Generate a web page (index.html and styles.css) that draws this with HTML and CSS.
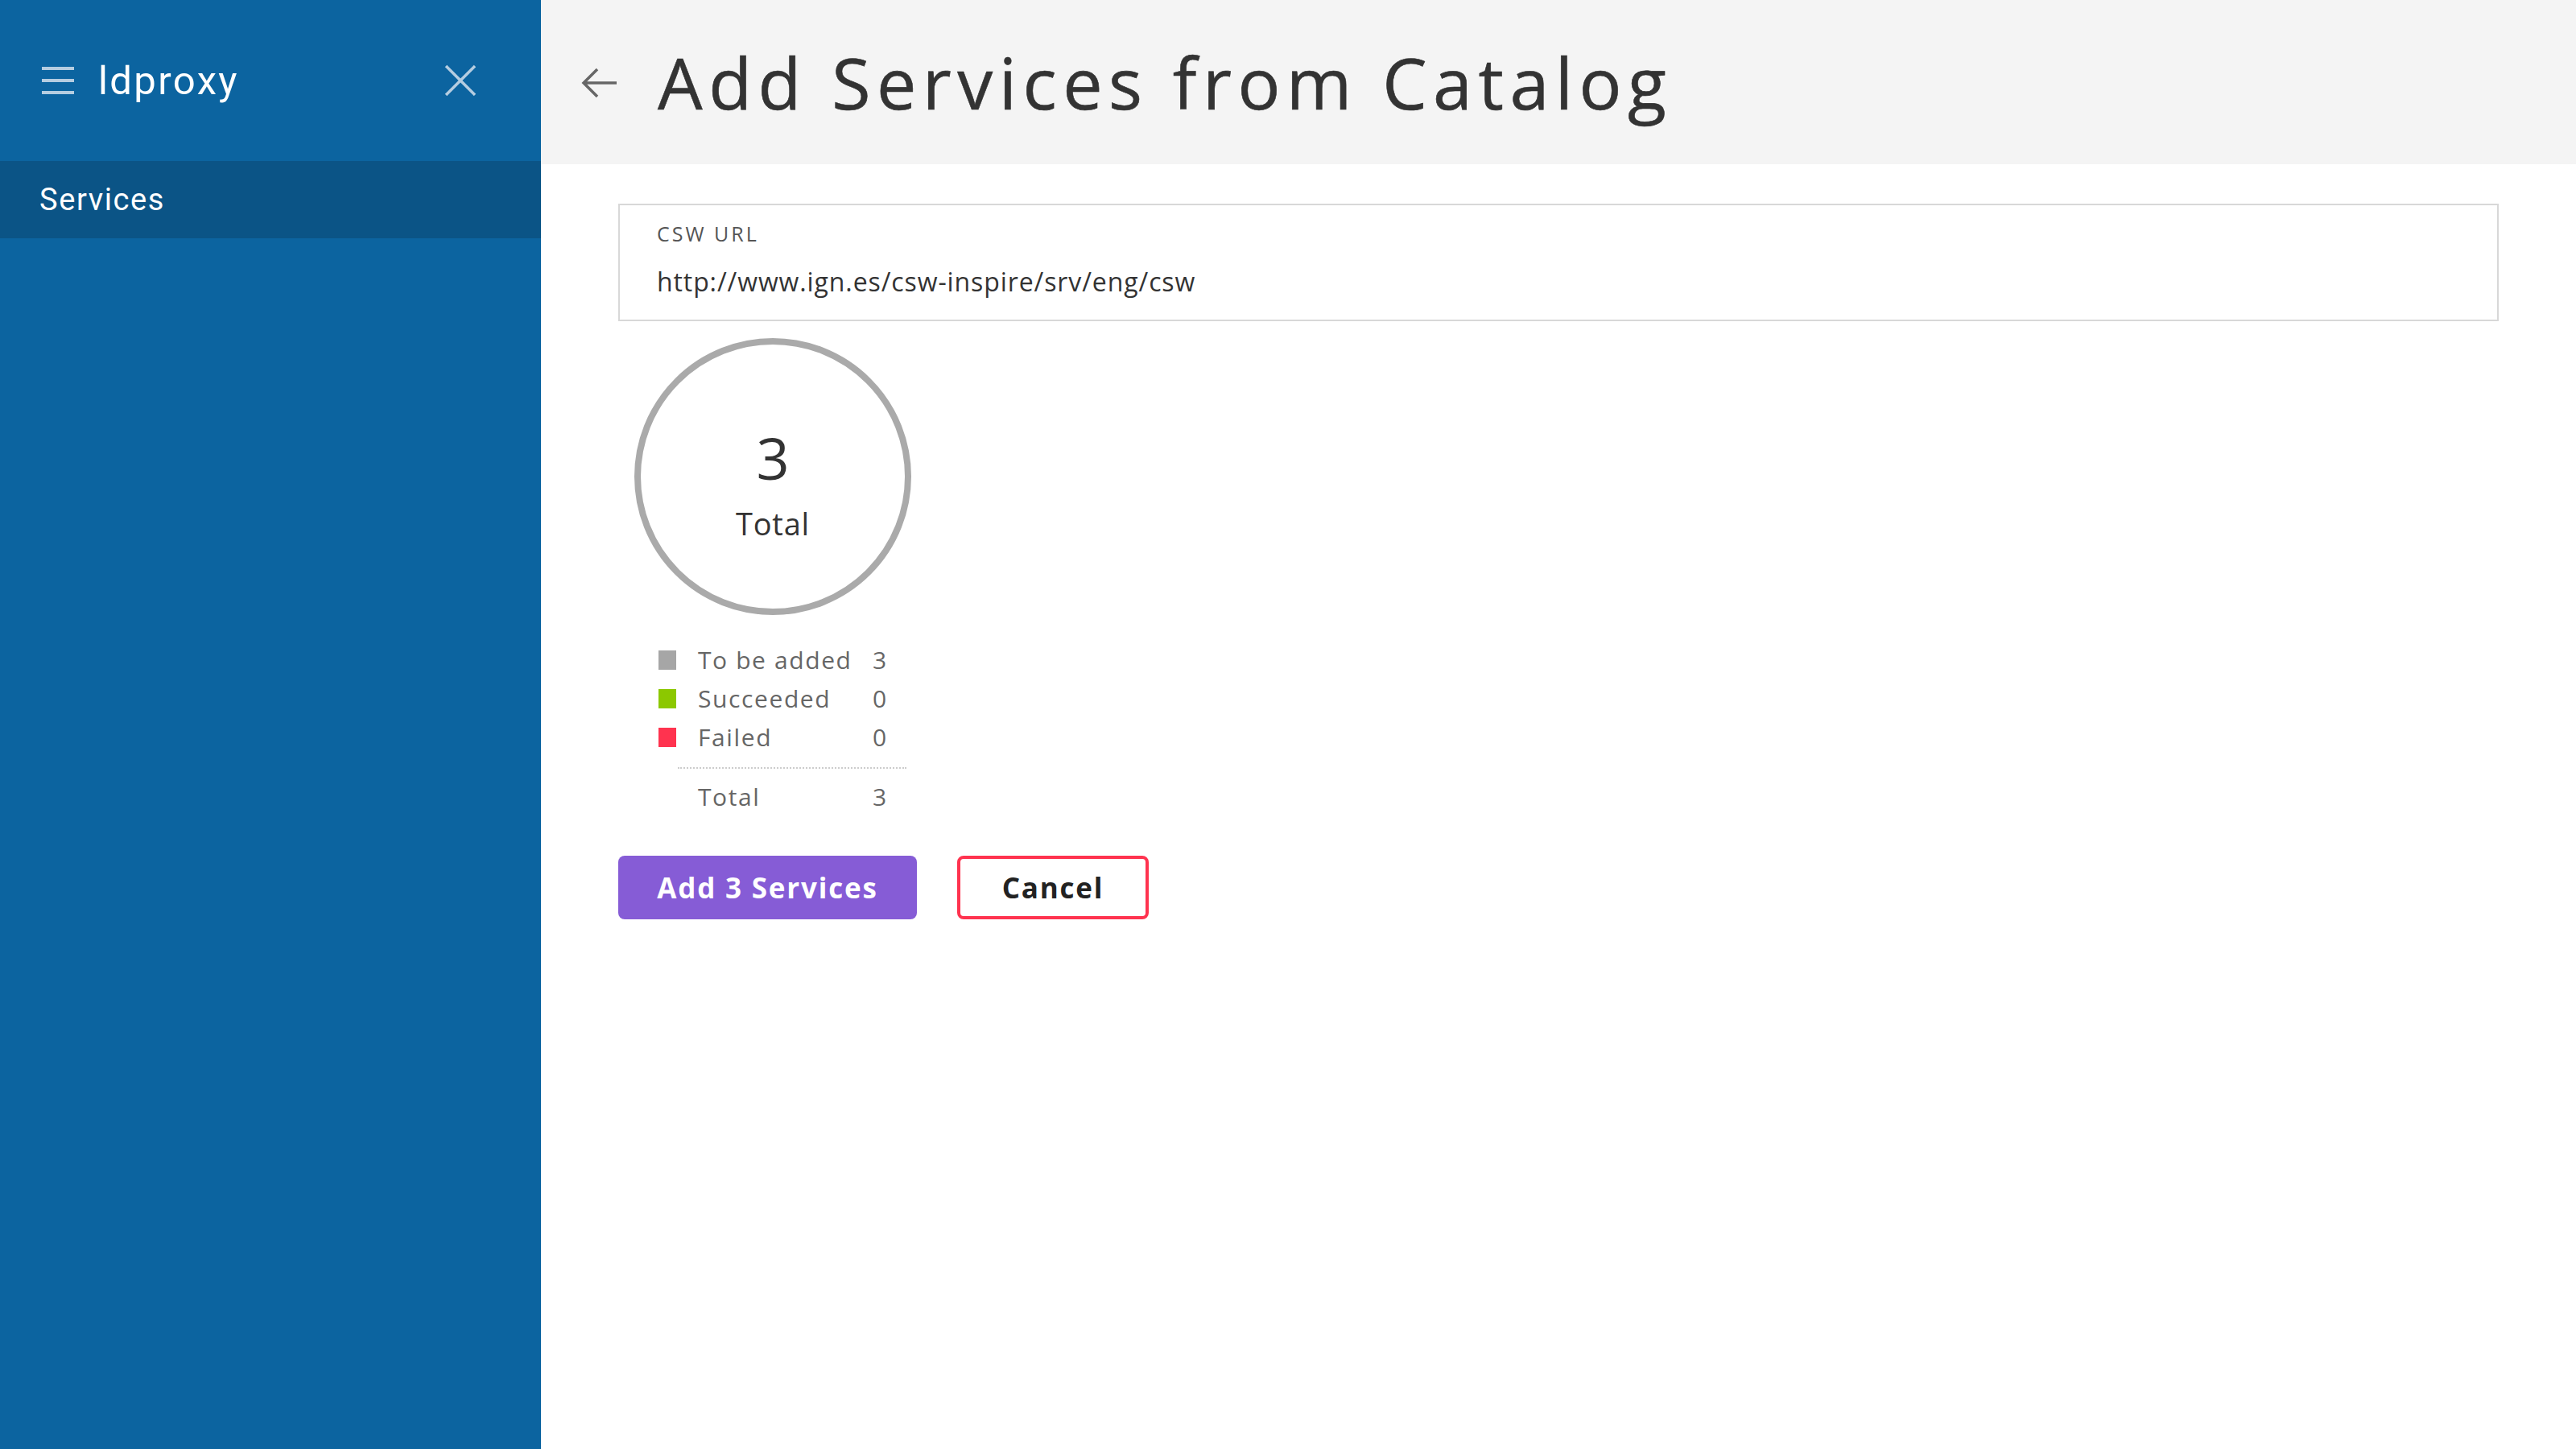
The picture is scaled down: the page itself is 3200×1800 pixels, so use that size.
FILE: index.html
```html
<!DOCTYPE html>
<html lang="en">
<head>
<meta charset="utf-8">
<title>ldproxy - Add Services from Catalog</title>
<link rel="stylesheet" href="styles.css">
</head>
<body>
<div class="app">
  <aside class="sidebar">
    <div class="side-head">
      <svg class="burger" width="40" height="34" viewBox="0 0 40 34"><rect x="0" y="0" width="40" height="4" fill="#b5cde1"/><rect x="0" y="15" width="40" height="4" fill="#b5cde1"/><rect x="0" y="30" width="40" height="4" fill="#b5cde1"/></svg>
      <span class="brand">ldproxy</span>
      <svg class="close" width="40" height="40" viewBox="0 0 40 40"><path d="M2 2 L38 38 M38 2 L2 38" stroke="#b5cde1" stroke-width="3.5" fill="none"/></svg>
    </div>
    <nav class="nav">
      <div class="nav-item active">Services</div>
    </nav>
  </aside>
  <main class="main">
    <header class="top">
      <svg class="back" width="46" height="40" viewBox="0 0 46 40"><path d="M44 20 H4 M20 3 L3 20 L20 37" stroke="#666" stroke-width="3.5" fill="none"/></svg>
      <h1 class="title">Add Services from Catalog</h1>
    </header>
    <section class="content">
      <div class="field">
        <div class="field-label">CSW URL</div>
        <div class="field-value">http://www.ign.es/csw-inspire/srv/eng/csw</div>
      </div>
      <div class="ring">
        <div class="ring-num">3</div>
        <div class="ring-label">Total</div>
      </div>
      <div class="legend">
        <span class="sq sq-gray"></span><span class="lg-label">To be added</span><span class="lg-num">3</span>
        <span class="sq sq-green"></span><span class="lg-label">Succeeded</span><span class="lg-num">0</span>
        <span class="sq sq-red"></span><span class="lg-label">Failed</span><span class="lg-num">0</span>
      </div>
      <div class="sep"></div>
      <div class="legend legend-total">
        <span class="sq"></span><span class="lg-label">Total</span><span class="lg-num">3</span>
      </div>
      <div class="actions">
        <button class="btn btn-primary">Add 3 Services</button>
        <button class="btn btn-cancel">Cancel</button>
      </div>
    </section>
  </main>
</div>
</body>
</html>
```
FILE: styles.css
```css
* { box-sizing: border-box; }
html, body { margin: 0; padding: 0; height: 100%; }
body { font-family: "Open Sans", "Noto Sans", sans-serif; background: #fff; color: #333; }
.app { display: flex; min-height: 1800px; }

.sidebar { width: 672px; flex: 0 0 672px; background: #0c64a0; color: #fff; }
.side-head { height: 200px; display: flex; align-items: center; padding: 0 80px 0 52px; }
.burger { display: block; flex: 0 0 auto; }
.brand { font-family: Roboto, "Noto Sans", sans-serif; font-size: 49px; margin-left: 30px; flex: 1; letter-spacing: 2.4px; }
.close { display: block; }
.nav-item { height: 96px; display: flex; align-items: center; padding-left: 49px; font-family: Roboto, "Noto Sans", sans-serif; font-size: 38px; letter-spacing: 1.6px; }
.nav-item.active { background: #0b5486; }

.main { flex: 1; display: flex; flex-direction: column; }
.top { height: 204px; background: #f4f4f4; display: flex; align-items: center; padding-left: 50px; }
.back { display: block; margin-top: 2px; }
.title { margin: 0 0 0 49px; font-weight: 400; font-size: 88px; color: #333; letter-spacing: 7.5px; line-height: 1; -webkit-text-stroke: 0.6px #333; }

.content { padding: 49px 96px; }
.field { border: 2px solid #d8d8d8; height: 146px; padding: 0 0 0 46px; }
.field-label { font-size: 25px; color: #555; margin-top: 20px; line-height: 30px; letter-spacing: 3px; }
.field-value { font-size: 32px; color: #333; margin-top: 25px; line-height: 40px; letter-spacing: 0.9px; }

.ring { width: 344px; height: 344px; border: 8px solid #aaa; border-radius: 50%; margin: 21px 0 0 20px; display: flex; flex-direction: column; align-items: center; justify-content: center; padding-top: 20px; }
.ring-num { font-size: 72px; line-height: 72px; color: #333; }
.ring-label { font-size: 38px; line-height: 44px; color: #333; margin-top: 24px; letter-spacing: 0.8px; }

.legend { display: grid; grid-template-columns: 22px 244px auto; grid-auto-rows: 48px; align-items: center; margin: 32px 0 0 50px; color: #666; font-size: 30px; }
.legend-total { margin-top: 11px; }
.sq { width: 22px; height: 24px; display: block; }
.sq-gray { background: #a6a6a6; }
.sq-green { background: #8cc800; }
.sq-red { background: #ff334f; }
.lg-label, .lg-num { line-height: 48px; letter-spacing: 1.6px; white-space: nowrap; }
.lg-label { padding-left: 27px; }
.sep { margin: 13px 0 0 74px; width: 284px; border-top: 2px dotted #ccc; }

.actions { display: flex; gap: 50px; margin-top: 49px; }
.btn { height: 79px; border-radius: 8px; font-family: "Open Sans", "Noto Sans", sans-serif; font-weight: 700; font-size: 35px; padding: 0; cursor: pointer; letter-spacing: 1.8px; }
.btn-primary { background: #865cd6; color: #fff; border: none; width: 371px; }
.btn-cancel { background: #fff; color: #222; border: 4px solid #ff334f; width: 238px; }
```
